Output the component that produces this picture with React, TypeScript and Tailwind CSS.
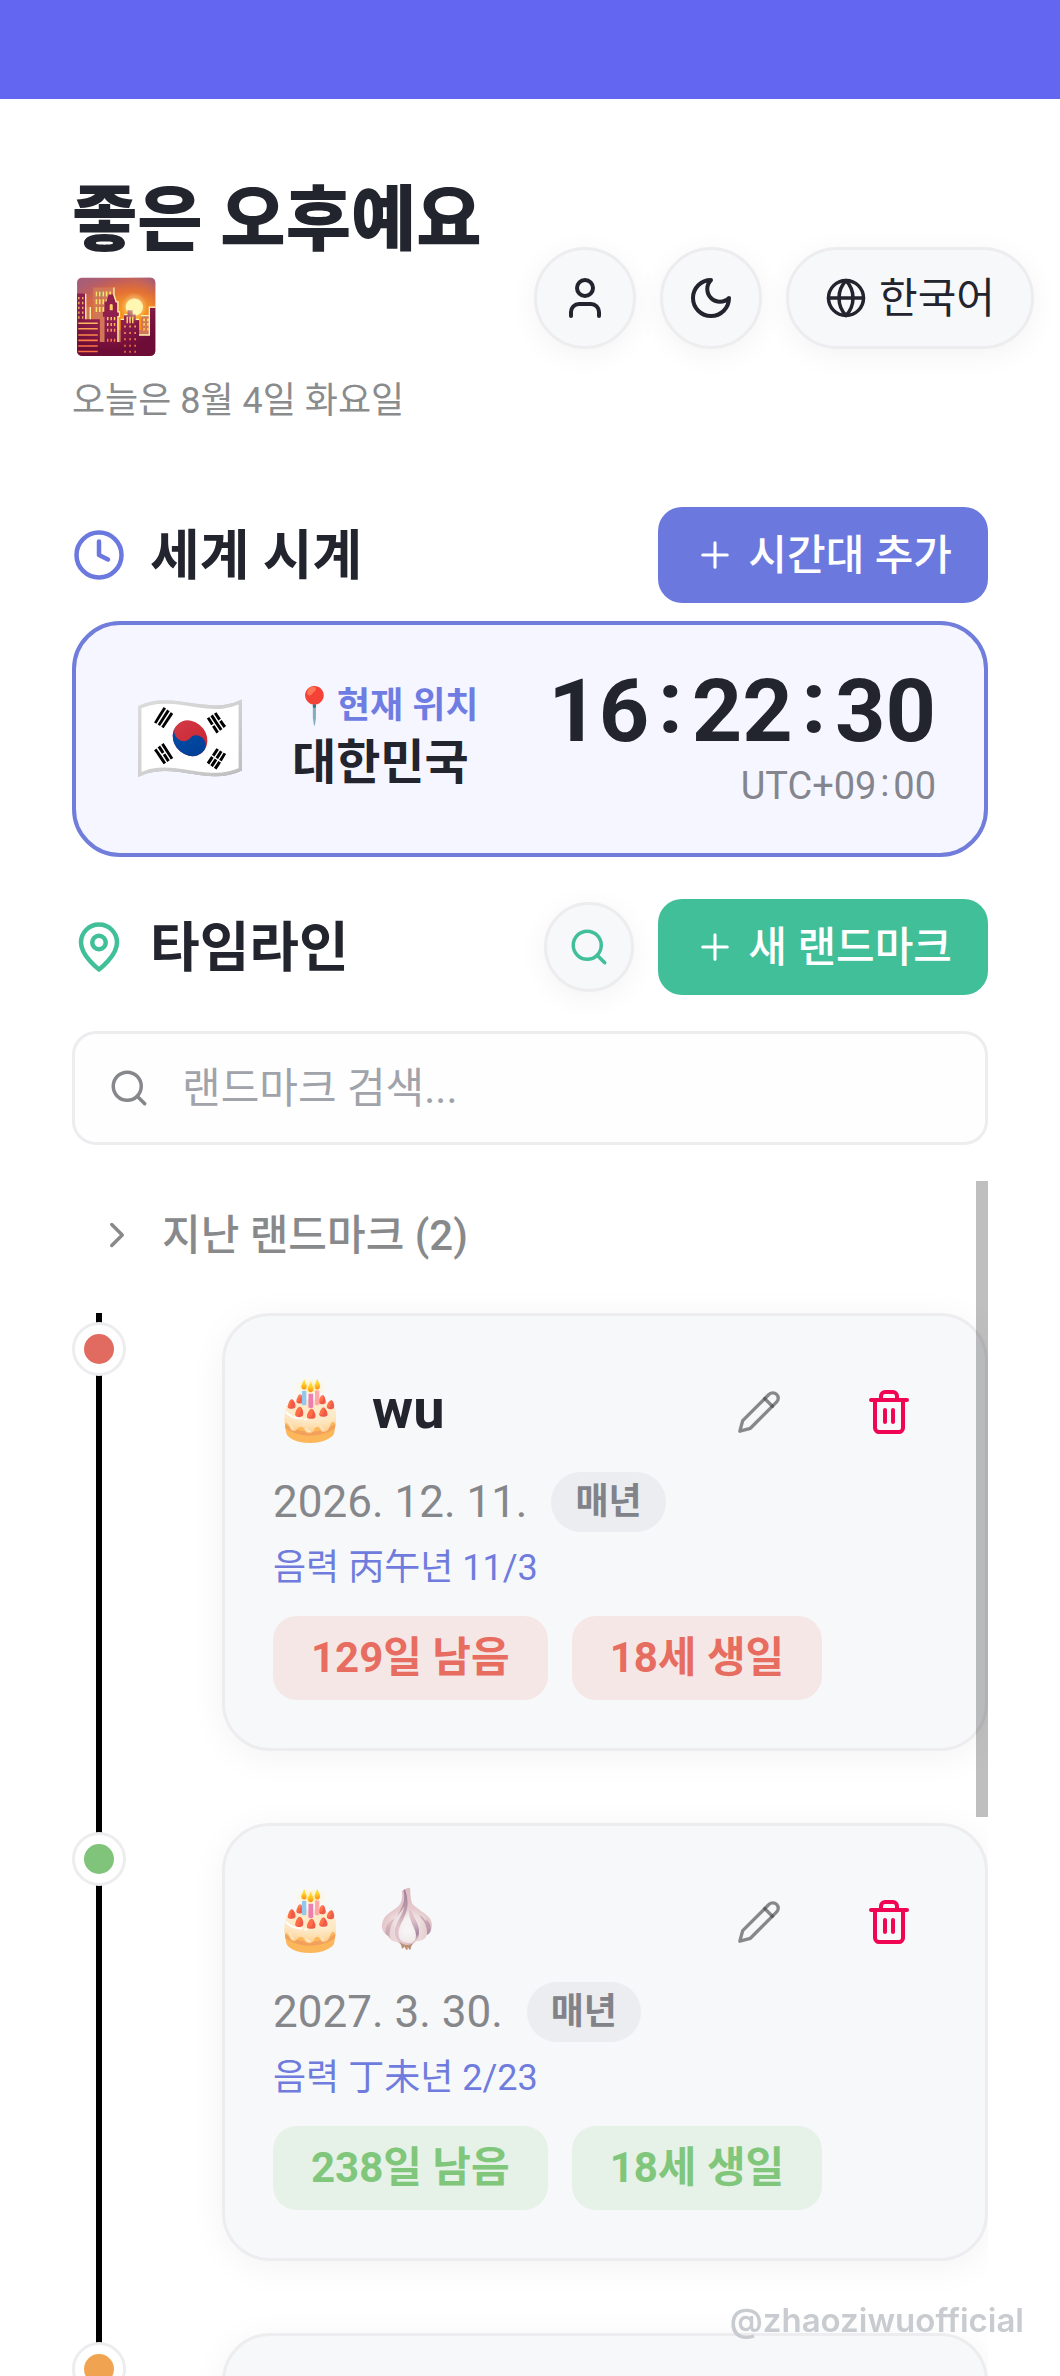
import React from "react";

type Tone = "red" | "green" | "orange";

type Landmark = {
  icon: string;
  title: string;
  date: string;
  repeat: string;
  lunar: string;
  chips: string[];
  tone: Tone;
};

const dotTone: Record<Tone, string> = {
  red: "bg-[#e16b60]",
  green: "bg-[#7fc47a]",
  orange: "bg-[#f0a452]",
};

const chipTone: Record<Tone, string> = {
  red: "bg-[#f6e7e7] text-[#e66d60]",
  green: "bg-[#e6f1e8] text-[#80c67b]",
  orange: "bg-[#fbeee0] text-[#f0a452]",
};

const landmarks: Landmark[] = [
  { icon: "🎂", title: "wu", date: "2026. 12. 11.", repeat: "매년", lunar: "음력 丙午년 11/3", chips: ["129일 남음", "18세 생일"], tone: "red" },
  { icon: "🎂", title: "🧄", date: "2027. 3. 30.", repeat: "매년", lunar: "음력 丁未년 2/23", chips: ["238일 남음", "18세 생일"], tone: "green" },
];

function Icon({ className, width = 2, children }: { className: string; width?: number; children: React.ReactNode }) {
  return (
    <svg viewBox="0 0 24 24" className={className} fill="none" stroke="currentColor" strokeWidth={width} strokeLinecap="round" strokeLinejoin="round" aria-hidden="true">
      {children}
    </svg>
  );
}

function SearchIcon({ className }: { className: string }) {
  return (
    <Icon className={className}>
      <circle cx="11" cy="11" r="8" />
      <path d="m21 21-4.3-4.3" />
    </Icon>
  );
}

function PlusIcon() {
  return (
    <Icon className="size-[42px]" width={1.75}>
      <path d="M5 12h14M12 5v14" />
    </Icon>
  );
}

/* Clock-style colon, centred on the digits beside it. */
function Colon() {
  return <span className="mx-[0.1em] align-[0.09em] leading-none">:</span>;
}

const roundButton = "flex shrink-0 items-center justify-center rounded-full border-[3px] border-[#ededf0] bg-[#f7f8fa] shadow-[0_6px_30px_rgba(0,0,0,0.05)]";

function Dot({ tone }: { tone: Tone }) {
  return (
    <span className="relative mt-[9px] flex size-[54px] shrink-0 items-center justify-center rounded-full border-[3px] border-[#ededf0] bg-white">
      <span className={"size-[30px] rounded-full " + dotTone[tone]} />
    </span>
  );
}

function LandmarkItem({ item }: { item: Landmark }) {
  return (
    <li className="flex items-start gap-24">
      <Dot tone={item.tone} />
      <article className="min-w-0 flex-1 rounded-[48px] border-[3px] border-[#ededf0] bg-[#f7f8fa] p-12 shadow-[0_6px_36px_rgba(0,0,0,0.05)]">
        <div className="flex h-24 items-center">
          <div className="flex flex-1 items-center gap-6 pb-[6px] leading-[60px]">
            <span className="text-[60px]">{item.icon}</span>
            <h3 className="text-[56px] font-bold text-[#22242e]">{item.title}</h3>
          </div>
          <div className="flex gap-[34px]">
            <button type="button" aria-label="편집" className="flex size-24 items-center justify-center text-[#3c3d40]/60">
              <Icon className="size-[46px]" width={1.75}>
                <path d="M17 3a2.85 2.83 0 1 1 4 4L7.5 20.5 2 22l1.5-5.5Z" />
                <path d="m15 5 4 4" />
              </Icon>
            </button>
            <button type="button" aria-label="삭제" className="flex size-24 items-center justify-center text-[#f00552]">
              <Icon className="size-12">
                <path d="M3 6h18M19 6v14c0 1-1 2-2 2H7c-1 0-2-1-2-2V6M8 6V4c0-1 1-2 2-2h4c1 0 2 1 2 2v2M10 11v6M14 11v6" />
              </Icon>
            </button>
          </div>
        </div>
        <div className="mt-3 flex items-center gap-6">
          <time className="text-[44px] leading-[60px] text-[#86878a]">{item.date}</time>
          <span className="rounded-full bg-[#ecedf1] px-6 text-[36px] leading-[60px] font-bold text-[#828389]">{item.repeat}</span>
        </div>
        <p className="mt-3 text-[36px] leading-[48px] text-[#6f7cdd]">{item.lunar}</p>
        <div className="mt-6 flex gap-6">
          {item.chips.map((chip) => (
            <span key={chip} className={"rounded-[24px] px-[38px] text-[42px] leading-[84px] font-bold " + chipTone[item.tone]}>
              {chip}
            </span>
          ))}
        </div>
      </article>
    </li>
  );
}

export default function App() {
  return (
    <div className="flex h-screen flex-col overflow-hidden bg-white font-['Roboto','Noto_Sans_CJK_KR',sans-serif] text-[#22242e]">
      <div className="h-[99px] shrink-0 bg-[#6366f1]" />

      <header className="flex shrink-0 items-center gap-6 pt-[72px] pr-[26px] pl-[72px]">
        <div className="min-w-0 flex-1">
          <h1 className="text-[71px] leading-[97px] font-black">좋은 오후예요 🌇</h1>
          <p className="mt-3 text-[36px] leading-[48px] text-[#8a8b8d]">오늘은 8월 4일 화요일</p>
        </div>
        <button type="button" aria-label="프로필" className={"size-[102px] " + roundButton}>
          <Icon className="size-12">
            <path d="M19 21v-2a4 4 0 0 0-4-4H9a4 4 0 0 0-4 4v2" />
            <circle cx="12" cy="7" r="4" />
          </Icon>
        </button>
        <button type="button" aria-label="다크 모드" className={"size-[102px] " + roundButton}>
          <Icon className="size-12">
            <path d="M12 3a6 6 0 0 0 9 9 9 9 0 1 1-9-9Z" />
          </Icon>
        </button>
        <button type="button" className={"h-[102px] gap-3 px-9 text-[42px] " + roundButton}>
          <Icon className="size-[42px]">
            <circle cx="12" cy="12" r="10" />
            <path d="M12 2a14.5 14.5 0 0 0 0 20 14.5 14.5 0 0 0 0-20M2 12h20" />
          </Icon>
          한국어
        </button>
      </header>

      <main className="flex min-h-0 flex-1 flex-col px-[72px] pt-[82px]">
        <section className="shrink-0">
          <div className="flex items-center gap-6">
            <Icon className="size-[54px] text-[#6b79df]">
              <circle cx="12" cy="12" r="10" />
              <path d="M12 6v6l4 2" />
            </Icon>
            <h2 className="flex-1 pt-1 text-[54px] leading-[72px] font-bold">세계 시계</h2>
            <button type="button" className="flex h-24 items-center gap-3 rounded-[24px] bg-[#6b79df] px-9 text-[42px] font-medium text-white">
              <PlusIcon />
              시간대 추가
            </button>
          </div>
          <div className="mt-[18px] flex h-[236px] items-center rounded-[48px] border-4 border-[#707dda] bg-[#f5f6ff] pr-12 pl-[58px]">
            <span className="text-[90px] leading-[96px]">🇰🇷</span>
            <div className="ml-[46px] flex-1">
              <p className="text-[36px] leading-[48px] font-bold text-[#6f7de3]">📍현재 위치</p>
              <p className="text-[48px] leading-[66px] font-bold">대한민국</p>
            </div>
            <div className="pb-1 text-right">
              <p className="text-[88px] leading-[94px] font-bold">
                16
                <Colon />
                22
                <Colon />
                30
              </p>
              <p className="text-[38px] leading-[58px] text-[#84858d]">
                UTC+09
                <Colon />
                00
              </p>
            </div>
          </div>
        </section>

        <section className="mt-[42px] flex min-h-0 flex-1 flex-col">
          <div className="flex shrink-0 items-center gap-6">
            <Icon className="size-[54px] text-[#41bf99]">
              <path d="M20 10c0 6-8 12-8 12s-8-6-8-12a8 8 0 0 1 16 0Z" />
              <circle cx="12" cy="10" r="3" />
            </Icon>
            <h2 className="flex-1 pt-1 text-[54px] leading-[72px] font-bold">타임라인</h2>
            <button type="button" aria-label="검색" className={"size-[90px] text-[#41bf99] " + roundButton}>
              <SearchIcon className="size-[42px]" />
            </button>
            <button type="button" className="flex h-24 items-center gap-3 rounded-[24px] bg-[#41bf99] px-9 text-[42px] font-medium text-white">
              <PlusIcon />
              새 랜드마크
            </button>
          </div>

          <label className="mt-9 flex h-[114px] shrink-0 items-center gap-8 rounded-[24px] border-[3px] border-[#ededf0] bg-[#fefefe] px-[33px] text-[#86878a]">
            <SearchIcon className="size-[42px] shrink-0" />
            <input type="search" aria-label="랜드마크 검색" placeholder="랜드마크 검색..." className="min-w-0 flex-1 bg-transparent text-[42px] text-[#22242e] outline-none placeholder:text-[#a1a3ab]" />
          </label>

          <div className="relative mt-9 min-h-0 flex-1">
            <div className="h-full overflow-y-auto [scrollbar-width:none]">
              <button type="button" className="ml-6 flex h-[108px] items-center gap-6 text-[42px] font-medium text-[#88898b]">
                <Icon className="size-[42px]">
                  <path d="m9 18 6-6-6-6" />
                </Icon>
                지난 랜드마크 (2)
              </button>
              <div className="relative mt-6">
                <span className="absolute inset-y-0 left-6 w-[6px] bg-black" />
                <ol className="flex flex-col gap-[72px]">
                  {landmarks.map((item) => (
                    <LandmarkItem key={item.date} item={item} />
                  ))}
                  <li className="flex items-start gap-24">
                    <Dot tone="orange" />
                    <article className="h-[438px] flex-1 rounded-[48px] border-[3px] border-[#ededf0] bg-[#f7f8fa] shadow-[0_6px_36px_rgba(0,0,0,0.05)]" />
                  </li>
                </ol>
              </div>
            </div>
            <span className="absolute top-0 right-0 h-[636px] w-3 bg-black/25" />
          </div>
        </section>
      </main>

      <span className="fixed right-[36px] bottom-[32px] font-['Inter',sans-serif] text-[33px] leading-[48px] font-semibold text-[#c8cbcf]">@zhaoziwuofficial</span>
    </div>
  );
}
